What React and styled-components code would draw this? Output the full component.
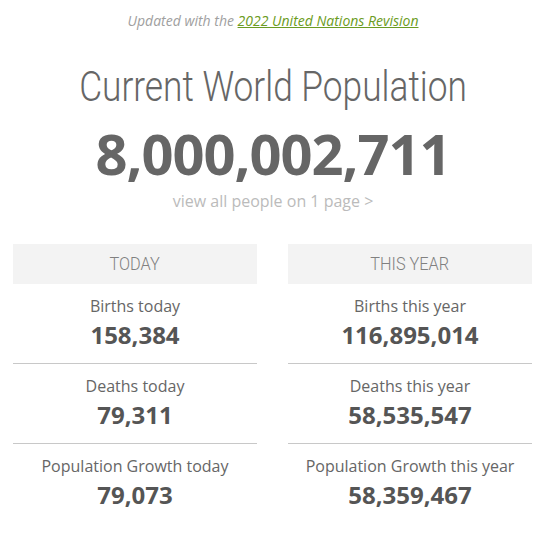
import styled, { createGlobalStyle } from "styled-components"

const GlobalStyle = createGlobalStyle`
    body {
        margin: 0;
        background: #fff;
        font-family: "Open Sans", "Liberation Sans", sans-serif;
    }
`

const Page = styled.div`
    width: 520px;
    margin-left: 13px;
    padding-top: 11px;
    text-align: center;
`

const Updated = styled.div`
    font-size: 14px;
    font-style: italic;
    color: #a0a0a0;
    line-height: 20px;

    a {
        color: #6b9b22;
        text-decoration: underline;
    }
`

const Title = styled.h1`
    margin: 32px 0 0;
    font-family: Roboto, "Open Sans", sans-serif;
    font-weight: 300;
    font-size: 42px;
    line-height: 48px;
    color: #666;
    transform: scaleX(0.84);
    white-space: nowrap;
`

const Counter = styled.div`
    margin-top: 6px;
    font-size: 56px;
    font-weight: 700;
    letter-spacing: -1px;
    line-height: 72px;
    color: #666;
`

const ViewAll = styled.div`
    font-size: 16px;
    color: #bbb;
    line-height: 20px;
    margin-top: 2px;
`

const Columns = styled.div`
    display: grid;
    grid-template-columns: 244px 244px;
    column-gap: 31px;
    margin-top: 33px;
`

const Column = styled.div``

const Header = styled.div`
    height: 40px;
    line-height: 40px;
    background: #f3f3f3;
`

const HeaderText = styled.span`
    display: inline-block;
    font-family: Roboto, "Open Sans", sans-serif;
    font-weight: 300;
    font-size: 18.5px;
    color: #808080;
    transform: scaleX(0.88);
`

const Row = styled.div`
    padding: 11px 0 12px;
    border-bottom: ${props => props.last ? 'none' : '1px solid #c8c8c8'};
`

const Label = styled.div`
    font-size: 16px;
    line-height: 22px;
    color: #666;
`

const Value = styled.div`
    margin-top: 2px;
    font-size: 24px;
    font-weight: 700;
    line-height: 32px;
    color: #555;
`

const data = [
    {
        title: 'TODAY',
        rows: [
            ['Births today', '158,384'],
            ['Deaths today', '79,311'],
            ['Population Growth today', '79,073'],
        ],
    },
    {
        title: 'THIS YEAR',
        rows: [
            ['Births this year', '116,895,014'],
            ['Deaths this year', '58,535,547'],
            ['Population Growth this year', '58,359,467'],
        ],
    },
]

const App = () => {
    return (
        <Page>
            <GlobalStyle />
            <Updated>
                Updated with the <a href="#">2022 United Nations Revision</a>
            </Updated>
            <Title>Current World Population</Title>
            <Counter>8,000,002,711</Counter>
            <ViewAll>view all people on 1 page &gt;</ViewAll>
            <Columns>
                {data.map(col => (
                    <Column key={col.title}>
                        <Header>
                            <HeaderText>{col.title}</HeaderText>
                        </Header>
                        {col.rows.map(([label, value], i) => (
                            <Row key={label} last={i === col.rows.length - 1}>
                                <Label>{label}</Label>
                                <Value>{value}</Value>
                            </Row>
                        ))}
                    </Column>
                ))}
            </Columns>
        </Page>
    )
}

export default App
